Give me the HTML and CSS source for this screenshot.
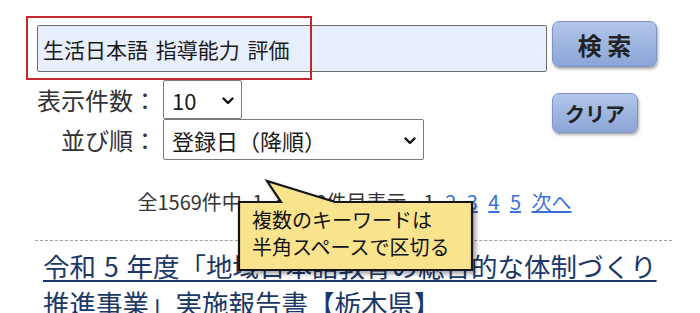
FILE: index.html
```html
<!DOCTYPE html>
<html lang="ja">
<head>
<meta charset="utf-8">
<title>検索</title>
<link rel="stylesheet" href="styles.css">
</head>
<body>
<div class="page">
  <div class="controls">
    <div class="left">
      <input class="keyword" type="text" value="生活日本語 指導能力 評価">
      <div class="fields">
        <label class="label">表示件数：</label>
        <span class="select-wrap s1">
          <select class="sel"><option>10</option></select>
          <svg class="chev" width="12" height="8" viewBox="0 0 12 8"><path d="M1.5 1.5 L6 6 L10.5 1.5" fill="none" stroke="#111" stroke-width="2.4" stroke-linecap="round" stroke-linejoin="round"/></svg>
        </span>
        <label class="label">並び順：</label>
        <span class="select-wrap s2">
          <select class="sel"><option>登録日（降順）</option></select>
          <svg class="chev" width="12" height="8" viewBox="0 0 12 8"><path d="M1.5 1.5 L6 6 L10.5 1.5" fill="none" stroke="#111" stroke-width="2.4" stroke-linecap="round" stroke-linejoin="round"/></svg>
        </span>
      </div>
    </div>
    <div class="right">
      <button class="btn search">検&nbsp;索</button>
      <button class="btn clear">クリア</button>
    </div>
  </div>

  <div class="pager"><span class="count">全1569件中 1 ～ 10件目表示</span><span class="pages"><span class="cur">1</span> <a href="#">2</a> <a href="#">3</a> <a href="#">4</a> <a href="#">5</a> <a href="#">次へ</a></span></div>

  <hr class="dash">

  <a class="title" href="#">令和 5 年度「地域日本語教育の総合的な体制づくり推進事業」実施報告書【栃木県】</a>

  <div class="highlight"></div>

  <div class="callout">
    <svg class="bubble" width="244" height="100" viewBox="0 0 244 100">
      <path d="M3 24 L45 24 L31 3 L99 24 L236 24 L236 92 L3 92 Z" fill="#f9e48d" stroke="#141414" stroke-width="2.2" stroke-linejoin="miter"/>
    </svg>
    <div class="callout-text">複数のキーワードは<br>半角スペースで区切る</div>
  </div>
</div>
</body>
</html>
```
FILE: styles.css
```css
html, body {
  margin: 0;
  padding: 0;
  background: #ffffff;
}
body {
  font-family: "Noto Sans CJK JP", "Noto Sans", sans-serif;
  color: #222;
  width: 700px;
  height: 313px;
  overflow: hidden;
}
.page {
  position: relative;
  width: 700px;
  height: 313px;
}
.controls {
  display: flex;
  gap: 5px;
  padding: 25px 0 0 37px;
}
.left {
  width: 510px;
  display: flex;
  flex-direction: column;
}
.keyword {
  box-sizing: border-box;
  width: 510px;
  height: 47px;
  margin: 0;
  padding: 0 5px;
  border: 1px solid #6f6f6f;
  border-radius: 2px;
  background: #e8effc;
  font-family: inherit;
  font-size: 21px;
  word-spacing: 3px;
  color: #1a1a1a;
  outline: none;
}
.fields {
  display: grid;
  grid-template-columns: 126px auto;
  margin-top: 8px;
  align-items: center;
  justify-items: start;
}
.label {
  justify-self: end;
  font-size: 24px;
  color: #333;
  padding-right: 6px;
  line-height: 30px;
}
.select-wrap {
  position: relative;
  display: block;
}
.sel {
  -webkit-appearance: none;
  appearance: none;
  box-sizing: border-box;
  margin: 0;
  border: 1px solid #7a7a7a;
  border-radius: 2px;
  background: #fff;
  font-family: inherit;
  font-size: 22px;
  color: #1a1a1a;
  padding: 0 0 0 8px;
  outline: none;
}
.s1 .sel { width: 79px; height: 39px; }
.s2 .sel { width: 261px; height: 41px; }
.chev {
  position: absolute;
  right: 8px;
  top: 50%;
  margin-top: -3px;
  pointer-events: none;
}
.right {
  display: flex;
  flex-direction: column;
  align-items: flex-start;
}
.btn {
  box-sizing: border-box;
  margin: 0;
  border: 1px solid #7e95c4;
  border-radius: 7px;
  background: linear-gradient(#b2c6e9, #8ba5d7);
  box-shadow: 1px 2px 3px rgba(0, 0, 0, 0.35);
  font-family: inherit;
  font-weight: bold;
  color: #222;
  padding: 0;
}
.search {
  width: 105px;
  height: 46px;
  margin-top: -4px;
  font-size: 24px;
}
.clear {
  width: 86px;
  height: 40px;
  margin-top: 26px;
  font-size: 20px;
}
.pager {
  text-align: center;
  font-size: 20px;
  line-height: 26px;
  margin-top: 29px;
  padding-left: 9px;
  color: #333;
  word-spacing: 6px;
  white-space: nowrap;
}
.pages {
  margin-left: 17px;
}
.pager a {
  color: #3c70d9;
}
.cur {
  color: #333;
}
.dash {
  margin: 25px 28px 0 35px;
  border: 0;
  border-top: 1px dashed #a0a0a0;
  height: 0;
}
.title {
  display: block;
  width: 625px;
  margin: 6px 0 0 43px;
  font-size: 26.5px;
  line-height: 37px;
  word-spacing: 2px;
  color: #1b3867;
  text-decoration: underline;
  text-underline-offset: 3px;
}
.highlight {
  position: absolute;
  left: 26px;
  top: 16px;
  width: 286px;
  height: 64px;
  box-sizing: border-box;
  border: 2px solid #c1272d;
}
.callout {
  position: absolute;
  left: 236px;
  top: 178px;
  width: 244px;
  height: 100px;
}
.bubble {
  display: block;
  filter: drop-shadow(3px 3px 2px rgba(0, 0, 0, 0.35));
}
.callout-text {
  position: absolute;
  left: 16px;
  top: 28px;
  font-size: 20px;
  line-height: 27px;
  color: #111;
  white-space: nowrap;
}
```
